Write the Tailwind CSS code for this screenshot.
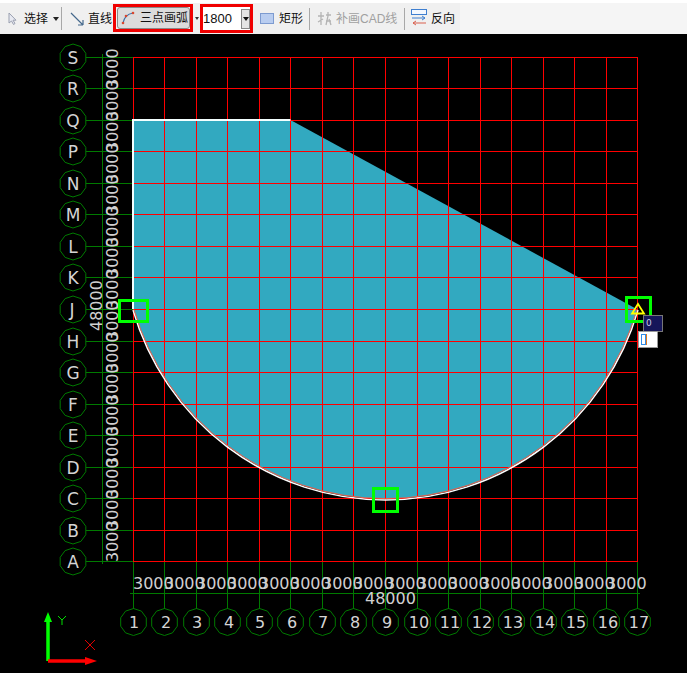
<!DOCTYPE html>
<html lang="zh-CN">
  <head>
    <meta charset="UTF-8" />
    <title>三点画弧</title>
    <script src="https://cdn.jsdelivr.net/npm/@tailwindcss/browser@4"></script>
  </head>
  <body class="bg-black">
    <div class="relative w-[687px] h-[673px] overflow-hidden bg-black">
      <!-- 工具栏 -->
      <div class="flex items-center h-[34px] border-t-[3px] border-white bg-[#f5f5f5] text-[12px] leading-none text-[#111] font-['Liberation_Sans','Noto_Sans_CJK_SC',sans-serif]">
        <div class="flex items-center h-full w-[460px] bg-[#f0f0f0]">
          <div class="flex items-center w-[61px] h-full pl-[8px]">
            <svg class="w-[9px] h-[13px]" viewBox="0 0 9 13"><path d="M1 1v10l2.5-2 2 3.5 1.5-1-2-3.300h3z" fill="#e8eaf2" stroke="#9aa0b0" /></svg>
            <span class="ml-[7px]">选择</span>
            <span class="ml-[5px] border-x-[3px] border-t-[4px] border-x-transparent border-t-[#222]"></span>
          </div>
          <div class="w-px h-[23px] bg-[#a8a8a8]"></div>
          <div class="flex items-center w-[51px] h-full pl-[8px]">
            <svg class="w-[14px] h-[14px]" viewBox="0 0 14 14"><path d="M1 1l12 12M13 13V8M13 13H8" fill="none" stroke="#44688c" stroke-width="1.200" /></svg>
            <span class="ml-[4px]">直线</span>
          </div>
          <div class="flex items-center w-[80px] h-[28px] border-[3px] border-[#f00000] mt-[-1px] pl-[1px]">
            <div class="flex items-center w-[74px] h-[22px] rounded-[3px] border border-[#8a8a8a] bg-[#dcdcdc] pl-[3px]">
              <svg class="w-[14px] h-[14px]" viewBox="0 0 14 14"><path d="M2 12C3 7 6 3 12 2" fill="none" stroke="#3a6ea8" stroke-width="1.200" /><circle cx="2" cy="12" r="1.300" fill="#d9482f" /><circle cx="5" cy="5" r="1.300" fill="#d9482f" /><circle cx="12" cy="2" r="1.300" fill="#d9482f" /></svg>
              <span class="ml-[5px]">三点画弧</span>
            </div>
          </div>
          <span class="w-[7px] flex justify-center"><span class="border-x-[2px] border-t-[3px] border-x-transparent border-t-[#333]"></span></span>
          <div class="flex items-center w-[53px] h-[29px] border-[3px] border-[#f00000] bg-white">
            <span class="w-[38px] text-[13px]">1800</span>
            <span class="flex items-center justify-center w-[9px] h-[20px] border border-[#888] bg-[#e4e4e4]"><span class="border-x-[3px] border-t-[4px] border-x-transparent border-t-[#111]"></span></span>
          </div>
          <div class="flex items-center w-[56px] h-full pl-[7px]">
            <svg class="w-[14px] h-[11px]" viewBox="0 0 14 11"><rect x="0.500" y="0.500" width="13" height="10" fill="#b9cdf0" stroke="#7d9bd0" /></svg>
            <span class="ml-[5px]">矩形</span>
          </div>
          <div class="w-px h-[22px] bg-[#a8a8a8]"></div>
          <div class="flex items-center w-[94px] h-full pl-[7px] text-[#a0a0a0]">
            <svg class="w-[15px] h-[15px]" viewBox="0 0 15 15"><path d="M1 5h6M4 1v13M1 11l5-3M9 4h5M11 1v4L9 14M12 8l2 6M9 10h5" fill="none" stroke="#b4b4b4" stroke-width="1.300" /></svg>
            <span class="ml-[4px]">补画CAD线</span>
          </div>
          <div class="w-px h-[22px] bg-[#a8a8a8]"></div>
          <div class="flex items-center h-full pl-[6px]">
            <svg class="w-[16px] h-[19px]" viewBox="0 0 16 19"><rect x="0.500" y="0.500" width="15" height="5" fill="#f4f8ff" stroke="#3f7fd0" /><path d="M1 9h13M11 7l3 2-3 2" fill="none" stroke="#3f7fd0" /><path d="M15 14H2M5 12l-3 2 3 2" fill="none" stroke="#d9604f" /></svg>
            <span class="ml-[4px]">反向</span>
          </div>
        </div>
      </div>

      <!-- 绘图区 -->
      <svg class="block w-[687px] h-[639px] font-['DejaVu_Sans',sans-serif]" viewBox="0 34 687 639">
        <defs>
          <polygon id="bubble" points="0,-13.500 7.900,-10.900 12.800,-4.200 12.800,4.200 7.900,10.900 0,13.500 -7.900,10.900 -12.800,4.200 -12.800,-4.200 -7.900,-10.900" fill="none" stroke="#007a00" />
        </defs>

        <!-- 板 -->
        <path d="M133.500 120H290.500L637.500 309.500A262.300 262.300 0 0 1 133.500 309.500Z" fill="#32a9c0" />

        <!-- 轴线延长与尺寸线 -->
        <path shape-rendering="crispEdges" fill="none" stroke="#007a00" d="M86 57.500H133M86 88.500H133M86 120.500H133M86 151.500H133M86 183.500H133M86 214.500H133M86 246.500H133M86 277.500H133M86 309.500H133M86 341.500H133M86 372.500H133M86 404.500H133M86 435.500H133M86 467.500H133M86 498.500H133M86 530.500H133M86 561.500H133M133.500 562V609M164.500 562V609M196.500 562V609M227.500 562V609M259.500 562V609M290.500 562V609M322.500 562V609M353.500 562V609M385.500 562V609M417.500 562V609M448.500 562V609M480.500 562V609M511.500 562V609M543.500 562V609M574.500 562V609M606.500 562V609M637.500 562V609M102.500 54V564M130 593.500H640" />

        <!-- 轴网 -->
        <path shape-rendering="crispEdges" fill="none" stroke="#ff0000" d="M133 57.500H638M133 88.500H638M133 120.500H638M133 151.500H638M133 183.500H638M133 214.500H638M133 246.500H638M133 277.500H638M133 309.500H638M133 341.500H638M133 372.500H638M133 404.500H638M133 435.500H638M133 467.500H638M133 498.500H638M133 530.500H638M133 561.500H638M133.500 57V562M164.500 57V562M196.500 57V562M227.500 57V562M259.500 57V562M290.500 57V562M322.500 57V562M353.500 57V562M385.500 57V562M417.500 57V562M448.500 57V562M480.500 57V562M511.500 57V562M543.500 57V562M574.500 57V562M606.500 57V562M637.500 57V562" />

        <!-- 板边线 -->
        <path d="M133 309V120H290.500" fill="none" stroke="#f4ffff" stroke-width="2" />
        <path d="M133 310A262.800 262.800 0 0 0 638 310" fill="none" stroke="#ffffff" stroke-width="1.500" />
        <path d="M134 309.500A261.800 261.800 0 0 0 637 309.500" fill="none" stroke="#e8604c" stroke-width="1" />

        <!-- 左侧轴号 -->
        <g>
          <use href="#bubble" x="73" y="57.500" /><use href="#bubble" x="73" y="88.500" /><use href="#bubble" x="73" y="120.500" /><use href="#bubble" x="73" y="151.500" /><use href="#bubble" x="73" y="183.500" /><use href="#bubble" x="73" y="214.500" /><use href="#bubble" x="73" y="246.500" /><use href="#bubble" x="73" y="277.500" /><use href="#bubble" x="73" y="309.500" /><use href="#bubble" x="73" y="341.500" /><use href="#bubble" x="73" y="372.500" /><use href="#bubble" x="73" y="404.500" /><use href="#bubble" x="73" y="435.500" /><use href="#bubble" x="73" y="467.500" /><use href="#bubble" x="73" y="498.500" /><use href="#bubble" x="73" y="530.500" /><use href="#bubble" x="73" y="561.500" />
        </g>
        <g class="fill-[#d4d4d4] text-[17px]" text-anchor="middle">
          <text x="73" y="63.500">S</text><text x="73" y="94.500">R</text><text x="73" y="126.500">Q</text><text x="73" y="157.500">P</text><text x="73" y="189.500">N</text><text x="73" y="220.500">M</text><text x="73" y="252.500">L</text><text x="73" y="283.500">K</text><text x="72" y="315.500">J</text><text x="73" y="347.500">H</text><text x="73" y="378.500">G</text><text x="73" y="410.500">F</text><text x="73" y="441.500">E</text><text x="73" y="473.500">D</text><text x="73" y="504.500">C</text><text x="73" y="536.500">B</text><text x="73" y="567.500">A</text>
        </g>

        <!-- 下方轴号 -->
        <g>
          <use href="#bubble" x="133.500" y="622" /><use href="#bubble" x="164.500" y="622" /><use href="#bubble" x="196.500" y="622" /><use href="#bubble" x="227.500" y="622" /><use href="#bubble" x="259.500" y="622" /><use href="#bubble" x="290.500" y="622" /><use href="#bubble" x="322.500" y="622" /><use href="#bubble" x="353.500" y="622" /><use href="#bubble" x="385.500" y="622" /><use href="#bubble" x="417.500" y="622" /><use href="#bubble" x="448.500" y="622" /><use href="#bubble" x="480.500" y="622" /><use href="#bubble" x="511.500" y="622" /><use href="#bubble" x="543.500" y="622" /><use href="#bubble" x="574.500" y="622" /><use href="#bubble" x="606.500" y="622" /><use href="#bubble" x="637.500" y="622" />
        </g>
        <g class="fill-[#d4d4d4] text-[16px]" text-anchor="middle">
          <text x="134" y="628">1</text><text x="166" y="628">2</text><text x="197" y="628">3</text><text x="229" y="628">4</text><text x="260" y="628">5</text><text x="292" y="628">6</text><text x="323" y="628">7</text><text x="355" y="628">8</text><text x="387" y="628">9</text><text x="419" y="628">10</text><text x="450" y="628">11</text><text x="482" y="628">12</text><text x="513" y="628">13</text><text x="545" y="628">14</text><text x="576" y="628">15</text><text x="608" y="628">16</text><text x="639" y="628">17</text>
        </g>

        <!-- 尺寸标注 -->
        <g class="fill-[#d0d0d0] text-[16px]">
          <text x="133" y="589">3000</text><text x="164" y="589">3000</text><text x="196" y="589">3000</text><text x="227" y="589">3000</text><text x="259" y="589">3000</text><text x="290" y="589">3000</text><text x="322" y="589">3000</text><text x="353" y="589">3000</text><text x="385" y="589">3000</text><text x="417" y="589">3000</text><text x="448" y="589">3000</text><text x="480" y="589">3000</text><text x="511" y="589">3000</text><text x="543" y="589">3000</text><text x="574" y="589">3000</text><text x="606" y="589">3000</text>
          <text x="365" y="604">48000</text>
          <text transform="translate(118 562) rotate(-90)">3000</text><text transform="translate(118 530) rotate(-90)">3000</text><text transform="translate(118 499) rotate(-90)">3000</text><text transform="translate(118 467) rotate(-90)">3000</text><text transform="translate(118 436) rotate(-90)">3000</text><text transform="translate(118 404) rotate(-90)">3000</text><text transform="translate(118 373) rotate(-90)">3000</text><text transform="translate(118 341) rotate(-90)">3000</text><text transform="translate(118 310) rotate(-90)">3000</text><text transform="translate(118 278) rotate(-90)">3000</text><text transform="translate(118 247) rotate(-90)">3000</text><text transform="translate(118 215) rotate(-90)">3000</text><text transform="translate(118 184) rotate(-90)">3000</text><text transform="translate(118 152) rotate(-90)">3000</text><text transform="translate(118 121) rotate(-90)">3000</text><text transform="translate(118 89) rotate(-90)">3000</text>
          <text transform="translate(102 331) rotate(-90)">48000</text>
        </g>

        <!-- 夹点框 -->
        <g fill="none" stroke="#00ff00" stroke-width="3" shape-rendering="crispEdges">
          <rect x="119.500" y="300.500" width="28" height="21" />
          <rect x="373.500" y="488.500" width="24" height="23" />
          <rect x="626.500" y="297.500" width="24" height="24" />
        </g>
        <path d="M638 304L644 313.500H632Z" fill="none" stroke="#ffff00" stroke-width="1.800" />

        <!-- 坐标系图标 -->
        <path d="M48 661V622" stroke="#00ff00" stroke-width="3.500" />
        <path d="M48 612L52 622H44Z" fill="#00ff00" />
        <path d="M48 661H86" stroke="#ff0000" stroke-width="3.500" />
        <path d="M97 661L85 657V665Z" fill="#ff0000" />
        <path d="M58 616L62 620L66 616M62 620V625" fill="none" stroke="#00e000" />
        <path d="M85 640L95 650M95 640L85 650" fill="none" stroke="#e00000" />
      </svg>

      <!-- 捕捉提示 -->
      <div class="absolute left-[643px] top-[315px] flex items-center w-[20px] h-[17px] border border-[#777] bg-[#16165a] pl-[2px] text-[9px] leading-none text-[#c8c8e8] font-['DejaVu_Sans',sans-serif]">0</div>
      <div class="absolute left-[638px] top-[331px] flex items-center w-[20px] h-[17px] border border-[#999] bg-white pl-[2px]">
        <span class="w-[5px] h-[11px] border border-[#2f8ce8] bg-white"></span>
        <span class="w-px h-[11px] bg-[#e07820]"></span>
      </div>
    </div>
  </body>
</html>
